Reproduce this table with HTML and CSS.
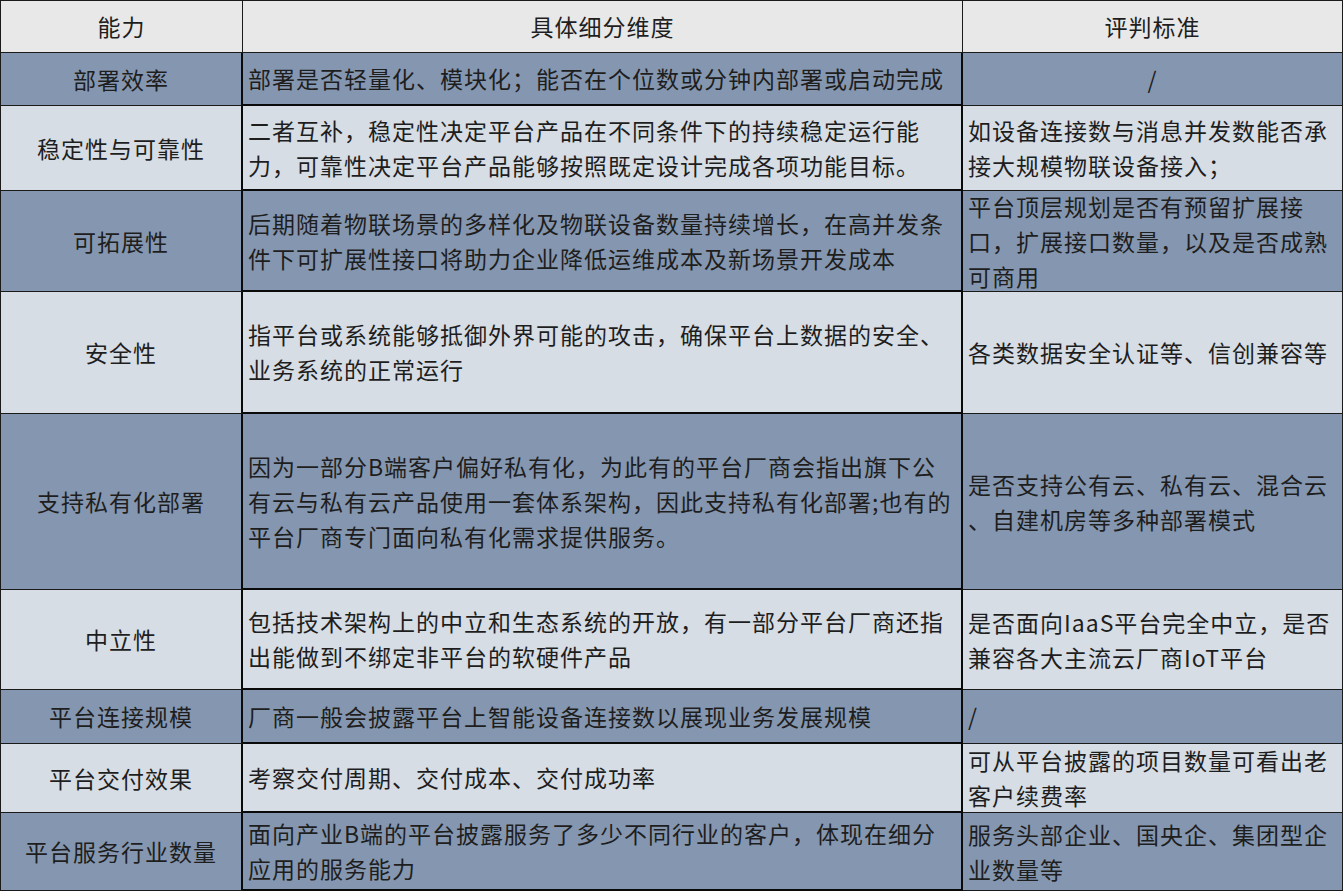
FILE: index.html
```html
<!DOCTYPE html>
<html lang="zh-CN">
<head>
<meta charset="utf-8">
<title>能力评判标准</title>
<link rel="stylesheet" href="styles.css">
</head>
<body>
<div class="table">
  <div class="cell head c1 center">能力</div>
  <div class="cell head c2 center">具体细分维度</div>
  <div class="cell head c3 center">评判标准</div>

  <div class="cell dark c1 center">部署效率</div>
  <div class="cell dark c2">部署是否轻量化、模块化；能否在个位数或分钟内部署或启动完成</div>
  <div class="cell dark c3 center">/</div>

  <div class="cell light c1 center">稳定性与可靠性</div>
  <div class="cell light c2">二者互补，稳定性决定平台产品在不同条件下的持续稳定运行能<br>力，可靠性决定平台产品能够按照既定设计完成各项功能目标。</div>
  <div class="cell light c3">如设备连接数与消息并发数能否承<br>接大规模物联设备接入；</div>

  <div class="cell dark c1 center">可拓展性</div>
  <div class="cell dark c2">后期随着物联场景的多样化及物联设备数量持续增长，在高并发条<br>件下可扩展性接口将助力企业降低运维成本及新场景开发成本</div>
  <div class="cell dark c3">平台顶层规划是否有预留扩展接<br>口，扩展接口数量，以及是否成熟<br>可商用</div>

  <div class="cell light c1 center">安全性</div>
  <div class="cell light c2">指平台或系统能够抵御外界可能的攻击，确保平台上数据的安全、<br>业务系统的正常运行</div>
  <div class="cell light c3">各类数据安全认证等、信创兼容等</div>

  <div class="cell dark c1 center">支持私有化部署</div>
  <div class="cell dark c2">因为一部分B端客户偏好私有化，为此有的平台厂商会指出旗下公<br>有云与私有云产品使用一套体系架构，因此支持私有化部署;也有的<br>平台厂商专门面向私有化需求提供服务。</div>
  <div class="cell dark c3">是否支持公有云、私有云、混合云<br>、自建机房等多种部署模式</div>

  <div class="cell light c1 center">中立性</div>
  <div class="cell light c2">包括技术架构上的中立和生态系统的开放，有一部分平台厂商还指<br>出能做到不绑定非平台的软硬件产品</div>
  <div class="cell light c3">是否面向IaaS平台完全中立，是否<br>兼容各大主流云厂商IoT平台</div>

  <div class="cell dark c1 center">平台连接规模</div>
  <div class="cell dark c2">厂商一般会披露平台上智能设备连接数以展现业务发展规模</div>
  <div class="cell dark c3">/</div>

  <div class="cell light c1 center">平台交付效果</div>
  <div class="cell light c2">考察交付周期、交付成本、交付成功率</div>
  <div class="cell light c3">可从平台披露的项目数量可看出老<br>客户续费率</div>

  <div class="cell dark c1 center">平台服务行业数量</div>
  <div class="cell dark c2">面向产业B端的平台披露服务了多少不同行业的客户，体现在细分<br>应用的服务能力</div>
  <div class="cell dark c3">服务头部企业、国央企、集团型企<br>业数量等</div>
</div>
</body>
</html>
```

FILE: styles.css
```css
html, body {
  margin: 0;
  padding: 0;
  background: #ffffff;
}

.table {
  display: grid;
  grid-template-columns: 242px 720px 380px;
  grid-template-rows: 52px 53px 85px 101px 122px 176px 100px 54px 69px 78px;
  width: 1343px;
  height: 891px;
  box-sizing: border-box;
  border-top: 1px solid #1a1a1a;
  border-left: 1px solid #1a1a1a;
  font-family: "Noto Sans CJK SC", "Noto Sans", sans-serif;
  font-size: 23px;
  letter-spacing: 1px;
  line-height: 35px;
  color: #1e1e1e;
}

.cell {
  box-sizing: border-box;
  display: flex;
  flex-direction: column;
  justify-content: center;
  padding: 0 0 0 5px;
  overflow: hidden;
  white-space: nowrap;
}

.center {
  align-items: center;
  text-align: center;
  padding: 0;
}

.head {
  background: #e8e8e8;
  border-right: 1px solid #1a1a1a;
  border-bottom: 1px solid #1a1a1a;
}

.dark {
  background: #8597b0;
}

.light {
  background: #d7dde5;
}

.c1 {
  border-right: 2px solid #0a0a0a;
  border-bottom: 1px solid #1a1a1a;
}

.c2 {
  border-right: 2px solid #0a0a0a;
  border-bottom: 2px solid #0a0a0a;
}

.c3 {
  border-right: 1px solid #1a1a1a;
  border-bottom: 1px solid #1a1a1a;
}

.head.c1,
.head.c2,
.head.c3 {
  border-right: 1px solid #1a1a1a;
  border-bottom: 1px solid #1a1a1a;
}
```
